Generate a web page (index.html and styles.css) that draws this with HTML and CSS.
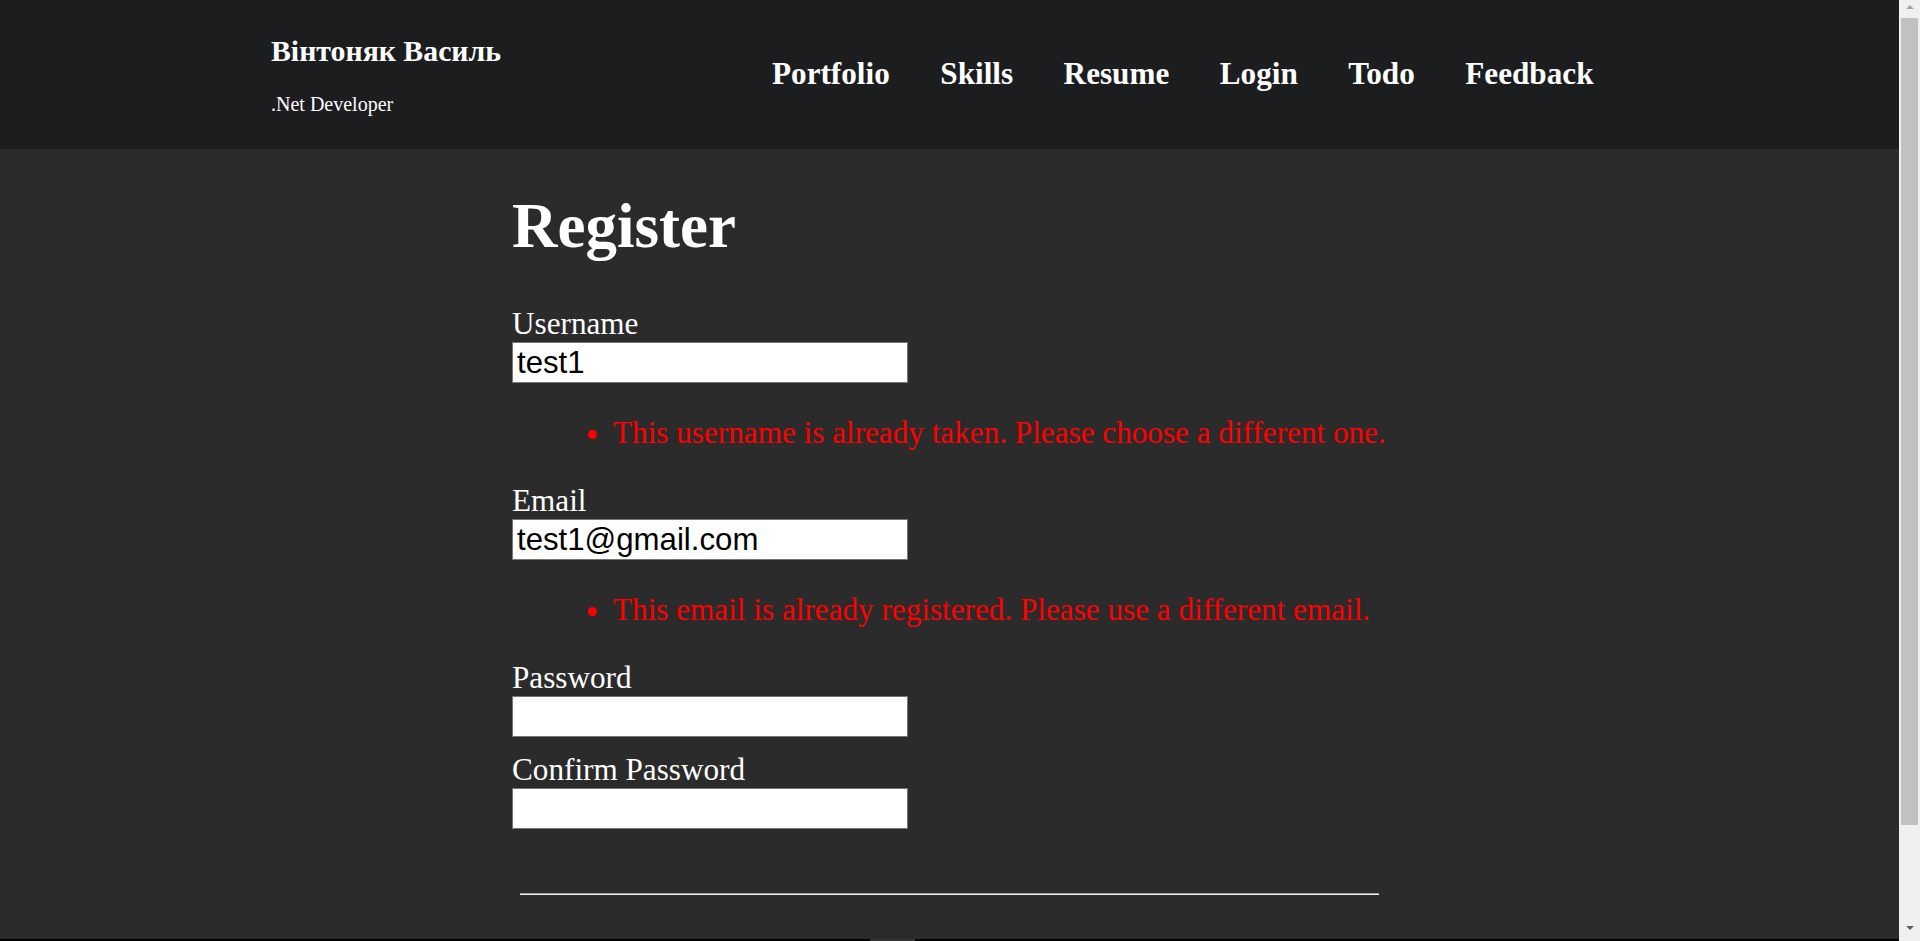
FILE: index.html
```html
<!DOCTYPE html>
<html lang="uk">
<head>
<meta charset="utf-8">
<title>Register</title>
<link rel="stylesheet" href="styles.css">
</head>
<body>
<div class="window">
  <div class="page">
    <header class="site-header">
      <div class="brand">
        <div class="brand-name">Вінтоняк Василь</div>
        <div class="brand-role">.Net Developer</div>
      </div>
      <nav class="nav">
        <a href="#">Portfolio</a>
        <a href="#">Skills</a>
        <a href="#">Resume</a>
        <a href="#">Login</a>
        <a href="#">Todo</a>
        <a href="#">Feedback</a>
      </nav>
    </header>
    <main class="content">
      <h1 class="title">Register</h1>
      <form class="form">
        <div class="field">
          <label for="u">Username</label>
          <input id="u" type="text" value="test1">
        </div>
        <ul class="errors">
          <li>This username is already taken. Please choose a different one.</li>
        </ul>
        <div class="field">
          <label for="e">Email</label>
          <input id="e" type="text" value="test1@gmail.com">
        </div>
        <ul class="errors">
          <li>This email is already registered. Please use a different email.</li>
        </ul>
        <div class="field">
          <label for="p">Password</label>
          <input id="p" type="password">
        </div>
        <div class="field">
          <label for="c">Confirm Password</label>
          <input id="c" type="password">
        </div>
      </form>
      <hr class="rule">
    </main>
    <div class="bottom-edge"><span class="bottom-tab"></span></div>
  </div>
  <div class="scrollbar">
    <span class="arrow-up"></span>
    <span class="thumb"></span>
    <span class="arrow-down"></span>
  </div>
</div>
</body>
</html>
```
FILE: styles.css
```css
html, body {
  margin: 0;
  padding: 0;
  height: 941px;
  overflow: hidden;
}
body {
  font-family: "Liberation Serif", "Times New Roman", serif;
  color: #fff;
  background: #2b2b2b;
}
.window {
  display: flex;
  height: 941px;
}
.page {
  flex: 1;
  display: flex;
  flex-direction: column;
  height: 941px;
  overflow: hidden;
  background: #2b2b2b;
}
.site-header {
  flex: 0 0 149px;
  height: 149px;
  box-sizing: border-box;
  background: #1c1d1f;
  display: flex;
  padding-left: 271px;
}
.brand {
  width: 501px;
  padding-top: 35px;
}
.brand-name {
  font-weight: bold;
  font-size: 29.8px;
  line-height: 32px;
  margin-bottom: 26px;
  white-space: nowrap;
}
.brand-role {
  font-size: 20px;
  line-height: 23px;
}
.nav {
  display: flex;
  gap: 50.5px;
  padding-top: 56px;
  align-items: flex-start;
}
.nav a {
  color: #fff;
  text-decoration: none;
  font-weight: bold;
  font-size: 31.2px;
  line-height: 36px;
}
.content {
  flex: 1;
  width: 875px;
  margin: 0 auto;
  padding-top: 41px;
  box-sizing: border-box;
}
.title {
  margin: 0 0 42px;
  font-size: 63px;
  line-height: 72px;
  font-weight: bold;
}
.form {
  margin: 0;
}
.field {
  margin-bottom: 13px;
}
.field label {
  display: block;
  padding-top: 2px;
  font-size: 31.2px;
  line-height: 36px;
}
.field input {
  display: block;
  margin-top: 0;
  width: 396px;
  height: 41px;
  box-sizing: border-box;
  border: 1px solid #767676;
  padding: 1px 2px 1px 4px;
  background: #fff;
  color: #000;
  font-family: "Liberation Sans", Arial, sans-serif;
  font-size: 31.2px;
  outline: none;
}
.errors {
  margin: 32px 0 30px;
  padding-left: 101px;
  color: #ff0000;
  font-size: 31.2px;
  line-height: 36px;
}
.rule {
  margin: 64px 8px 0;
  height: 0;
  border: none;
  border-top: 1px solid #9a9a9a;
  border-bottom: 1px solid #f2f2f2;
}
.bottom-edge {
  flex: 0 0 2px;
  height: 2px;
  background: #000;
  display: flex;
  padding-left: 870px;
}
.bottom-tab {
  width: 45px;
  height: 2px;
  background: #333;
}
.scrollbar {
  flex: 0 0 21px;
  width: 21px;
  height: 941px;
  background: #f0f0f0;
  display: flex;
  flex-direction: column;
  align-items: center;
}
.arrow-up {
  width: 0;
  height: 0;
  margin-top: 5px;
  border-left: 4px solid transparent;
  border-right: 4px solid transparent;
  border-bottom: 4px solid #a3a3a3;
}
.thumb {
  width: 17px;
  height: 807px;
  margin-top: 9px;
  background: #c1c1c1;
}
.arrow-down {
  width: 0;
  height: 0;
  margin-top: 101px;
  border-left: 4px solid transparent;
  border-right: 4px solid transparent;
  border-top: 4px solid #606060;
}
```
